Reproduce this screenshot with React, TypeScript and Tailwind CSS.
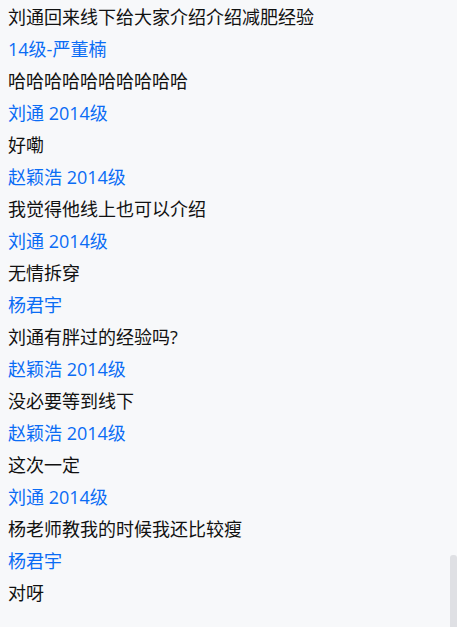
const rows: { text: string; name?: boolean }[] = [
  { text: '刘通回来线下给大家介绍介绍减肥经验' },
  { text: '14级-严董楠', name: true },
  { text: '哈哈哈哈哈哈哈哈哈哈' },
  { text: '刘通 2014级', name: true },
  { text: '好嘞' },
  { text: '赵颖浩 2014级', name: true },
  { text: '我觉得他线上也可以介绍' },
  { text: '刘通 2014级', name: true },
  { text: '无情拆穿' },
  { text: '杨君宇', name: true },
  { text: '刘通有胖过的经验吗?' },
  { text: '赵颖浩 2014级', name: true },
  { text: '没必要等到线下' },
  { text: '赵颖浩 2014级', name: true },
  { text: '这次一定' },
  { text: '刘通 2014级', name: true },
  { text: '杨老师教我的时候我还比较瘦' },
  { text: '杨君宇', name: true },
  { text: '对呀' },
];

export default function App() {
  return (
    <div className="relative h-[627px] w-[457px] overflow-hidden bg-[#f7f8fa] pt-[1px] font-['Open_Sans','Noto_Sans_CJK_SC',sans-serif] text-[18px]">
      {rows.map((r, i) => (
        <div
          key={i}
          className={`h-8 px-2 leading-8 ${r.name ? 'text-[#0a6cf5]' : 'text-[#111]'}`}
        >
          {r.text}
        </div>
      ))}
      {/* scrollbar thumb */}
      <div className="absolute right-0 top-[555px] h-[72px] w-[7px] rounded-t-[3px] bg-[#dfe0e4]" />
    </div>
  );
}
